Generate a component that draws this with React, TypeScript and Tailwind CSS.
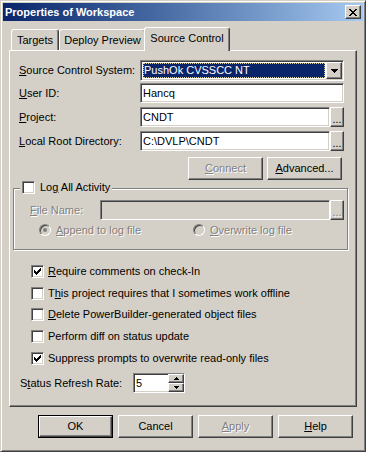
import type { ReactNode } from "react";

const raised =
    "border border-t-white border-l-white border-r-[#404040] border-b-[#404040] shadow-[inset_-1px_-1px_0_#808080]";
const sunken =
    "border border-t-[#808080] border-l-[#808080] border-r-white border-b-white shadow-[inset_1px_1px_0_#404040,inset_-1px_-1px_0_#d4d0c8]";
const grayed = "text-[#808080] [text-shadow:1px_1px_0_#fff]";

const K = ({ children }: { children: ReactNode }) => <span className="underline">{children}</span>;

// pixel glyphs, drawn as rects so they stay crisp
const Pixels = ({ rows, w, h, color = "#000" }: { rows: number[][]; w: number; h: number; color?: string }) => (
    <svg width={w} height={h} viewBox={`0 0 ${w} ${h}`} shapeRendering="crispEdges">
        {rows.map(([y, x0, x1], i) => (
            <rect key={i} x={x0} y={y} width={x1 - x0 + 1} height={1} fill={color} />
        ))}
    </svg>
);

const closeX = [
    [0, 0, 1], [0, 6, 7], [1, 1, 2], [1, 5, 6], [2, 2, 5], [3, 3, 4],
    [4, 2, 5], [5, 1, 2], [5, 5, 6], [6, 0, 1], [6, 6, 7],
];
const checkMark = [
    [0, 6, 6], [1, 5, 6], [2, 0, 0], [2, 4, 6], [3, 0, 1], [3, 3, 5], [4, 0, 4], [5, 1, 3], [6, 2, 2],
];
const arrowDown = [[0, 0, 6], [1, 1, 5], [2, 2, 4], [3, 3, 3]];
const arrowUpSmall = [[0, 2, 2], [1, 1, 3], [2, 0, 4]];
const arrowDownSmall = [[0, 0, 4], [1, 1, 3], [2, 2, 2]];

const Btn = ({
    children,
    disabled,
    def,
    className = "",
}: {
    children: ReactNode;
    disabled?: boolean;
    def?: boolean;
    className?: string;
}) => {
    const inner = (
        <div className={`${raised} flex h-full w-full items-center justify-center ${disabled ? grayed : ""}`}>
            {children}
        </div>
    );
    return <div className={`${def ? "border border-black" : ""} ${className}`}>{inner}</div>;
};

const Check = ({ checked }: { checked?: boolean }) => (
    <div className={`${sunken} flex h-[13px] w-[13px] shrink-0 items-center justify-center bg-white`}>
        {checked && <Pixels rows={checkMark} w={7} h={7} />}
    </div>
);

const Radio = ({ selected }: { selected?: boolean }) => (
    <div
        className={`flex h-[12px] w-[12px] shrink-0 items-center justify-center rounded-full border border-t-[#808080] border-l-[#808080] border-r-white border-b-white bg-[#d4d0c8] shadow-[inset_1px_1px_0_#404040]`}
    >
        {selected && <div className="h-[4px] w-[4px] rounded-full bg-[#808080]" />}
    </div>
);

const Dots = ({ disabled }: { disabled?: boolean }) => (
    <div className={`${raised} flex h-[20px] w-[14px] shrink-0 items-end justify-center pb-[2px] leading-[9px] ${disabled ? grayed : ""}`}>
        ...
    </div>
);

const Field = ({ label, children }: { label: ReactNode; children: ReactNode }) => (
    <div className="flex h-[20px] items-center">
        <div className="w-[121px] shrink-0">{label}</div>
        {children}
    </div>
);

const Input = ({ value }: { value: string }) => (
    <div className={`${sunken} flex h-[20px] flex-1 items-center bg-white pl-[2px]`}>{value}</div>
);

export default function App() {
    const tabs = [
        { name: "Targets", w: "w-[48px]" },
        { name: "Deploy Preview", w: "w-[87px]" },
    ];
    const options = [
        { label: <><K>R</K>equire comments on check-In</>, checked: true, mt: "" },
        { label: <>T<K>h</K>is project requires that I sometimes work offline</>, checked: false, mt: "mt-[9px]" },
        { label: <><K>D</K>elete PowerBuilder-generated object files</>, checked: false, mt: "mt-[8px]" },
        { label: <>Perform diff on status update</>, checked: false, mt: "mt-[9px]" },
        { label: <>Suppress prompts to overwrite read-only files</>, checked: true, mt: "mt-[9px]" },
    ];

    return (
        <div className="font-['Liberation_Sans',Arial,sans-serif] text-[11px] leading-[13px] text-black">
            <div className="flex h-[452px] w-[366px] flex-col border border-t-[#d4d0c8] border-l-[#d4d0c8] border-r-[#404040] border-b-[#404040] bg-[#d4d0c8] p-[2px] shadow-[inset_1px_1px_0_#fff,inset_-1px_-1px_0_#808080]">
                {/* title bar */}
                <div className="flex h-[18px] shrink-0 items-center justify-between bg-linear-to-r from-[#0a246a] to-[#a6caf0] px-[2px]">
                    <span className="font-bold text-white">Properties of Workspace</span>
                    <div className={`${raised} flex h-[14px] w-[16px] items-center justify-center bg-[#d4d0c8]`}>
                        <Pixels rows={closeX} w={8} h={7} />
                    </div>
                </div>

                {/* tabs */}
                <div className="mx-[6px] mt-[6px] flex flex-col">
                    <div className="flex items-end pl-[2px]">
                        {tabs.map((t) => (
                            <div
                                key={t.name}
                                className={`flex h-[21px] ${t.w} items-center justify-center rounded-t-[3px] border-t border-l border-r border-t-white border-l-white border-r-[#404040] pt-[1px] shadow-[inset_-1px_0_0_#808080]`}
                            >
                                {t.name}
                            </div>
                        ))}
                        <div className="relative z-10 -mx-[2px] -mb-px flex h-[24px] w-[86px] items-center justify-center rounded-t-[3px] border-t border-l border-r border-t-white border-l-white border-r-[#404040] bg-[#d4d0c8] pb-[2px] shadow-[inset_-1px_0_0_#808080]">
                            Source Control
                        </div>
                    </div>

                    <div className={`${raised} flex h-[357px] flex-col pl-[9px] pr-[12px]`}>
                        <div className="mt-[9px] flex h-[21px] items-center">
                            <div className="w-[121px] shrink-0">
                                <K>S</K>ource Control System:
                            </div>
                            <div className={`${sunken} flex h-[21px] flex-1 bg-white p-[1px]`}>
                                <div className="m-[1px] flex flex-1 items-center border border-dotted border-[#d8d0a0] bg-[#0a246a] text-white">
                                    PushOk CVSSCC NT
                                </div>
                                <div className={`${raised} flex w-[16px] shrink-0 items-center justify-center bg-[#d4d0c8]`}>
                                    <Pixels rows={arrowDown} w={7} h={4} />
                                </div>
                            </div>
                        </div>

                        <div className="mt-[2px]">
                            <Field label={<><K>U</K>ser ID:</>}>
                                <Input value="Hancq" />
                            </Field>
                        </div>
                        <div className="mt-[4px]">
                            <Field label={<><K>P</K>roject:</>}>
                                <Input value="CNDT" />
                                <Dots />
                            </Field>
                        </div>
                        <div className="mt-[4px]">
                            <Field label={<><K>L</K>ocal Root Directory:</>}>
                                <Input value="C:\DVLP\CNDT" />
                                <Dots />
                            </Field>
                        </div>

                        <div className="mt-[6px] flex justify-end gap-[4px] pr-[2px]">
                            <Btn disabled className="h-[23px] w-[75px]">
                                <K>C</K>onnect
                            </Btn>
                            <Btn className="h-[23px] w-[75px]">
                                <K>A</K>dvanced...
                            </Btn>
                        </div>

                        {/* log group */}
                        <div className="relative mt-[8px] -ml-[6px] -mr-[4px] border border-[#808080] pt-[11px] pb-[13px] pl-[16px] pr-[3px] shadow-[inset_1px_1px_0_#fff,1px_1px_0_#fff]">
                            <div className="absolute -top-[8px] left-[6px] flex items-center gap-[5px] bg-[#d4d0c8] px-[2px]">
                                <Check />
                                <span>
                                    Lo<K>g</K> All Activity
                                </span>
                            </div>
                            <div className="flex h-[20px] items-center">
                                <div className={`w-[70px] shrink-0 ${grayed}`}>
                                    <K>F</K>ile Name:
                                </div>
                                <div className={`${sunken} h-[20px] flex-1 bg-[#d4d0c8]`} />
                                <Dots disabled />
                            </div>
                            <div className="mt-[4px] flex h-[12px] items-center pl-[9px]">
                                <div className="flex w-[154px] items-center gap-[5px]">
                                    <Radio selected />
                                    <span className={grayed}>
                                        <K>A</K>ppend to log file
                                    </span>
                                </div>
                                <div className="flex items-center gap-[5px]">
                                    <Radio />
                                    <span className={grayed}>
                                        <K>O</K>verwrite log file
                                    </span>
                                </div>
                            </div>
                        </div>

                        <div className="mt-[15px] flex flex-col pl-[12px]">
                            {options.map((o, i) => (
                                <div key={i} className={`flex h-[13px] items-center gap-[4px] ${o.mt}`}>
                                    <Check checked={o.checked} />
                                    <span>{o.label}</span>
                                </div>
                            ))}
                        </div>

                        <div className="mt-[8px] flex h-[20px] items-center pl-[1px]">
                            <div className="w-[113px] shrink-0">
                                S<K>t</K>atus Refresh Rate:
                            </div>
                            <div className={`${sunken} flex h-[20px] w-[52px] bg-white`}>
                                <div className="flex flex-1 items-center pl-[2px]">5</div>
                                <div className="flex w-[16px] flex-col">
                                    <div className={`${raised} flex h-[9px] items-center justify-center bg-[#d4d0c8]`}>
                                        <Pixels rows={arrowUpSmall} w={5} h={3} />
                                    </div>
                                    <div className={`${raised} flex h-[9px] items-center justify-center bg-[#d4d0c8]`}>
                                        <Pixels rows={arrowDownSmall} w={5} h={3} />
                                    </div>
                                </div>
                            </div>
                        </div>
                    </div>
                </div>

                {/* footer buttons */}
                <div className="mt-[8px] flex justify-end gap-[5px] pr-[10px]">
                    <Btn def className="h-[23px] w-[75px]">
                        OK
                    </Btn>
                    <Btn className="h-[23px] w-[75px]">Cancel</Btn>
                    <Btn disabled className="h-[23px] w-[75px]">
                        <K>A</K>pply
                    </Btn>
                    <Btn className="h-[23px] w-[75px]">
                        <K>H</K>elp
                    </Btn>
                </div>
            </div>
        </div>
    );
}
